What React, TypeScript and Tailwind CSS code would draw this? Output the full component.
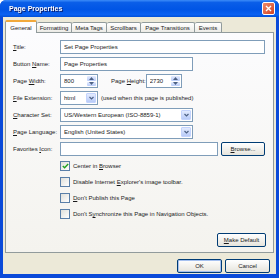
import React from 'react';

const font = 'font-["Liberation_Sans",Arial,sans-serif]';

const Chevron: React.FC = () => (
  <svg width="5" height="4" viewBox="0 0 5 4">
    <path d="M0.5 1 L2.5 3 L4.5 1" fill="none" stroke="#4d6185" strokeWidth="1.2" />
  </svg>
);

const ComboArrow: React.FC = () => (
  <span className="w-[10px] h-full flex items-center justify-center rounded-[1px] border border-[#c3d3fd] bg-linear-to-b from-[#e3ebfe] to-[#b8cbf8]">
    <Chevron />
  </span>
);

const Spinner: React.FC = () => (
  <span className="w-[9px] h-full flex flex-col gap-px">
    <span className="flex-1 flex items-center justify-center rounded-[1px] bg-linear-to-b from-[#e3ebfe] to-[#b8cbf8]">
      <svg width="5" height="3" viewBox="0 0 5 3">
        <path d="M0 3 L2.5 0 L5 3 Z" fill="#4d6185" />
      </svg>
    </span>
    <span className="flex-1 flex items-center justify-center rounded-[1px] bg-linear-to-b from-[#e3ebfe] to-[#b8cbf8]">
      <svg width="5" height="3" viewBox="0 0 5 3">
        <path d="M0 0 L2.5 3 L5 0 Z" fill="#4d6185" />
      </svg>
    </span>
  </span>
);

const Label: React.FC<{ children: React.ReactNode; w?: string }> = ({ children, w = 'w-[47px]' }) => (
  <span className={`${w} shrink-0 whitespace-nowrap`}>{children}</span>
);

const Field: React.FC<{ className?: string; children?: React.ReactNode; right?: React.ReactNode }> = ({
  className = '',
  children,
  right,
}) => (
  <div className={`h-[14px] border border-[#7f9db9] bg-white flex items-center pl-[3px] pr-px py-px ${className}`}>
    <span className="flex-1 whitespace-nowrap overflow-hidden">{children}</span>
    {right}
  </div>
);

const XpButton: React.FC<{ className?: string; children: React.ReactNode; def?: boolean }> = ({
  className = '',
  children,
  def,
}) => (
  <div
    className={`h-[14px] rounded-[2px] border border-[#003c74] bg-linear-to-b from-white to-[#e6e4dc] flex items-center justify-center ${
      def ? 'shadow-[inset_0_0_0_1px_#a6c1f0]' : ''
    } ${className}`}
  >
    {children}
  </div>
);

const Check: React.FC<{ checked?: boolean; children: React.ReactNode }> = ({ checked, children }) => (
  <div className="h-[16px] flex items-center pl-[47px]">
    <span className="w-[10px] h-[10px] border border-[#5a7fa8] bg-linear-to-br from-[#e0e0da] to-white flex items-center justify-center">
      {checked && (
        <svg width="7" height="6" viewBox="0 0 7 6">
          <path d="M0.8 3 L2.6 4.8 L6.2 1" fill="none" stroke="#21a121" strokeWidth="1.4" />
        </svg>
      )}
    </span>
    <span className="ml-[3px] whitespace-nowrap">{children}</span>
  </div>
);

const tabs = [
  { name: 'General', w: 'w-[32px]' },
  { name: 'Formatting', w: 'w-[35px]' },
  { name: 'Meta Tags', w: 'w-[35px]' },
  { name: 'Scrollbars', w: 'w-[34px]' },
  { name: 'Page Transitions', w: 'w-[54px]' },
  { name: 'Events', w: 'w-[27px]' },
];

export default function App() {
  return (
    <div className={`w-[279px] h-[278px] flex flex-col bg-[#0a4ad9] rounded-t-[6px] overflow-hidden text-[6px] leading-none text-[#1a1a1a] ${font}`}>
      {/* title bar */}
      <div className="h-[17px] shrink-0 flex items-center pl-[9px] pr-[4px] bg-[linear-gradient(180deg,#3c8cf8_0%,#0a5ee8_15%,#0055e5_55%,#0a61f2_85%,#0050d8_100%)]">
        <span className="flex-1 text-white font-bold text-[7px] drop-shadow-[1px_1px_0_#0a1f6e]">Page Properties</span>
        <span className="w-[13px] h-[13px] rounded-[2px] border border-white bg-linear-to-br from-[#f08a6a] to-[#d04020] flex items-center justify-center">
          <svg width="7" height="7" viewBox="0 0 7 7">
            <path d="M1 1 L6 6 M6 1 L1 6" stroke="white" strokeWidth="1.4" />
          </svg>
        </span>
      </div>

      {/* body */}
      <div className="flex-1 mx-[3px] mb-[4px] bg-[#ece9d8] flex flex-col px-[2px] pt-[3px]">
        {/* tabs */}
        <div className="h-[12px] flex items-end relative z-10">
          {tabs.map((t, i) =>
            i === 0 ? (
              <div
                key={t.name}
                className={`${t.w} h-[13px] -mb-px border border-[#919b9c] border-b-0 border-t-2 border-t-[#f2a93b] rounded-t-[2px] bg-[#fcfcfe] flex items-center justify-center`}
              >
                {t.name}
              </div>
            ) : (
              <div
                key={t.name}
                className={`${t.w} h-[10px] border border-[#919b9c] border-b-0 border-l-0 rounded-t-[2px] bg-linear-to-b from-white to-[#ecebe6] flex items-center justify-center whitespace-nowrap`}
              >
                {t.name}
              </div>
            )
          )}
        </div>

        {/* panel */}
        <div className="h-[221px] border border-[#919b9c] bg-linear-to-b from-[#fcfcfe] to-[#f4f3ee] flex flex-col pt-[7px] pl-[7px] pr-[8px] pb-[5px]">
          <div className="flex flex-col gap-[3px]">
            <div className="flex items-center">
              <Label>
                <u>T</u>itle:
              </Label>
              <Field className="flex-1">Set Page Properties</Field>
            </div>
            <div className="flex items-center">
              <Label>
                Button <u>N</u>ame:
              </Label>
              <Field className="w-[133px]">Page Properties</Field>
            </div>
            <div className="flex items-center">
              <Label>
                Page <u>W</u>idth:
              </Label>
              <Field className="w-[38px]" right={<Spinner />}>
                800
              </Field>
              <span className="ml-[13px]">
                <Label>
                  Page <u>H</u>eight:
                </Label>
              </span>
              <Field className="w-[36px]" right={<Spinner />}>
                2730
              </Field>
            </div>
            <div className="flex items-center">
              <Label>
                <u>F</u>ile Extension:
              </Label>
              <Field className="w-[38px]" right={<ComboArrow />}>
                html
              </Field>
              <span className="ml-[3px] whitespace-nowrap">(used when this page is published)</span>
            </div>
            <div className="flex items-center">
              <Label>
                <u>C</u>haracter Set:
              </Label>
              <Field className="w-[133px]" right={<ComboArrow />}>
                US/Western European (ISO-8859-1)
              </Field>
            </div>
            <div className="flex items-center">
              <Label>
                <u>P</u>age Language:
              </Label>
              <Field className="w-[133px]" right={<ComboArrow />}>
                English (United States)
              </Field>
            </div>
            <div className="flex items-center">
              <Label>
                Favorites <u>I</u>con:
              </Label>
              <Field className="flex-1" />
              <XpButton className="w-[44px] ml-[3px]">
                <span>
                  <u>B</u>rowse...
                </span>
              </XpButton>
            </div>
          </div>

          <div className="mt-[2px] flex flex-col">
            <Check checked>
              Center in <u>B</u>rowser
            </Check>
            <Check>
              Disable Internet <u>E</u>xplorer's image toolbar.
            </Check>
            <Check>
              <u>D</u>on't Publish this Page
            </Check>
            <Check>
              Don't S<u>y</u>nchronize this Page in Navigation Objects.
            </Check>
          </div>

          <div className="mt-auto flex justify-end">
            <XpButton className="w-[49px] -mr-[1px]">
              <span>
                <u>M</u>ake Default
              </span>
            </XpButton>
          </div>
        </div>

        {/* dialog buttons */}
        <div className="mt-[6px] flex justify-end gap-[3px] pr-[4px]">
          <XpButton className="w-[45px]" def>
            OK
          </XpButton>
          <XpButton className="w-[45px]">Cancel</XpButton>
        </div>
      </div>
    </div>
  );
}
